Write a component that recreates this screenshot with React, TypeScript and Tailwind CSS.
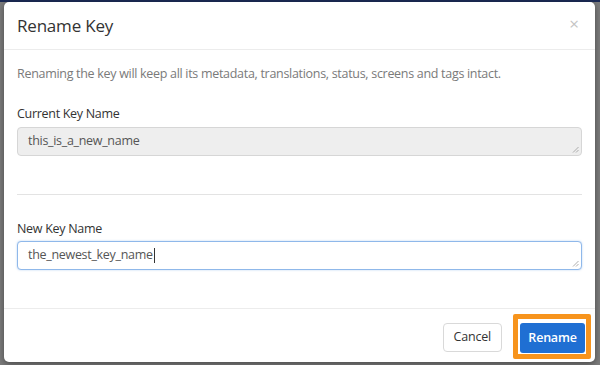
import React from "react";

const font = { fontFamily: '"Open Sans", "Liberation Sans", sans-serif' };

export default function App() {
  return (
    <div
      className="relative h-[365px] w-[600px] overflow-hidden bg-[#7b7b7b] font-['Open_Sans',_'Liberation_Sans',_sans-serif]"
      style={font}
    >
      {/* dimmed page underneath */}
      <div className="h-[2px] w-full bg-[#1b2a55]" />
      <div className="ml-[4px] flex h-[360px] w-[591px] flex-col rounded-[5px] bg-white shadow-[0_2px_6px_rgba(0,0,0,0.4)]">
        {/* header */}
        <div className="flex h-[48px] items-center justify-between border-b border-[#ececec] pl-[13px] pr-[16px]">
          <h4 className="text-[17px] tracking-[-0.2px] text-[#333]">Rename Key</h4>
          <span className="-mt-[5px] text-[17px] leading-none text-[#c4c4c4]">×</span>
        </div>

        {/* body */}
        <div className="flex flex-1 flex-col px-[13px]">
          <p className="mt-[15px] text-[12.5px] leading-[17px] tracking-[-0.3px] text-[#7a7a7a]">
            Renaming the key will keep all its metadata, translations, status, screens and tags intact.
          </p>

          <label className="mt-[23px] text-[12.5px] leading-[17px] tracking-[-0.3px] text-[#333]">Current Key Name</label>
          <div className="relative mt-[5px] flex h-[29px] items-center rounded-[4px] border border-[#d6d6d6] bg-[#eeeeee] px-[10px] text-[12.5px] tracking-[-0.3px] text-[#555]">
            this_is_a_new_name
            <Grip />
          </div>

          <div className="mt-[38px] h-px bg-[#e3e3e3]" />

          <label className="mt-[25px] text-[12.5px] leading-[17px] tracking-[-0.3px] text-[#333]">New Key Name</label>
          <div className="relative mt-[4px] flex h-[29px] items-center rounded-[4px] border border-[#8fb8ea] bg-white px-[10px] text-[12.5px] tracking-[-0.3px] text-[#555] shadow-[0_0_2px_rgba(102,160,230,0.5)]">
            the_newest_key_name
            <span className="ml-px h-[15px] w-px bg-[#333]" />
            <Grip />
          </div>
        </div>

        {/* footer */}
        <div className="flex h-[54px] items-start justify-end gap-[11px] border-t border-[#ececec] pr-[4px] pt-[5px]">
          <button className="mt-[9px] h-[29px] rounded-[4px] border border-[#d9d9d9] bg-white px-[10px] text-[12.5px] tracking-[-0.2px] text-[#333]">
            Cancel
          </button>
          <div className="rounded-[2px] border-[5px] border-[#f7941d] bg-white pb-[1px] pl-[2px] pr-[1px] pt-[4px]">
            <button className="h-[30px] w-[65px] rounded-[3px] bg-[#1f6fd3] text-[12.5px] font-semibold tracking-[-0.2px] text-white">
              Rename
            </button>
          </div>
        </div>
      </div>
    </div>
  );
}

function Grip() {
  return (
    <svg className="absolute bottom-[2px] right-[2px]" width="7" height="7" viewBox="0 0 7 7">
      <path d="M6.5 1 L1 6.5 M6.5 4 L4 6.5" stroke="#999" strokeWidth="0.8" />
    </svg>
  );
}
